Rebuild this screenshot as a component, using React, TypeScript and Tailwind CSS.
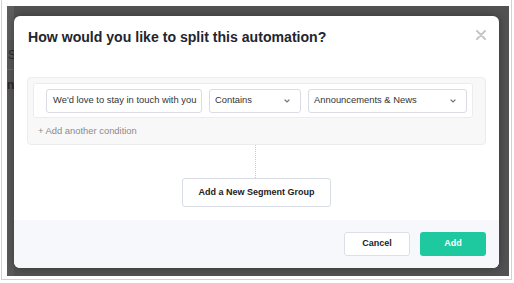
const FONT = 'font-["Liberation_Sans","Arial",sans-serif]'

function Chevron() {
  return (
    <svg width="6" height="4" viewBox="0 0 6 4" className="text-[#777]">
      <path d="M1 1l2 2 2-2" fill="none" stroke="currentColor" strokeWidth="1.2" strokeLinecap="round" />
    </svg>
  )
}

function Select({ label, width }: { label: string; width: string }) {
  return (
    <div
      className={`${width} h-[24px] flex items-center justify-between pl-[5px] pr-[10px] bg-white border border-[#d9dce5] rounded-[3px] text-[9.4px] text-[#333]`}
    >
      <span>{label}</span>
      <Chevron />
    </div>
  )
}

export default function App() {
  return (
    <div className={`w-[514px] h-[283px] bg-white ${FONT}`}>
      <div className="w-[511px] h-[280px] ml-[1px] border-x border-b border-[#d2d2d2] pt-[6px] pl-[5px]">
        <div className="w-[502px] h-[270px] bg-[#525252] flex">
          {/* page behind the overlay */}
          <div className="w-[7px] overflow-hidden bg-[#595959] text-[#2b2b2b] text-[12px]">
            <div className="h-[34px] bg-[#5e5e5e]" />
            <div className="h-[30px] leading-[30px] pl-[1px] border-b border-[#6a6a6a]">S</div>
            <div className="h-[30px] leading-[30px] font-bold">n</div>
          </div>

          <div className="pt-[10px]">
            <div className="w-[485px] h-[252px] bg-white rounded-[6px] overflow-hidden flex flex-col shadow-[0_0_8px_rgba(0,0,0,0.35)]">
              <div className="flex items-start justify-between pl-[14px] pr-[13px] pt-[11px] h-[61px]">
                <h1 className="text-[14.1px] leading-[20px] font-bold text-[#22262e]">
                  How would you like to split this automation?
                </h1>
                <svg width="10" height="10" viewBox="0 0 10 10" className="mt-[3px] text-[#c6c6c6]">
                  <path d="M1 1l8 8M9 1l-8 8" stroke="currentColor" strokeWidth="2" strokeLinecap="round" />
                </svg>
              </div>

              <div className="mx-[13px] bg-[#f8f8f9] border border-[#ececef] rounded-[4px] pt-[5px] pl-[5px] pr-[12px] h-[68px]">
                <div className="bg-white border border-[#ececef] rounded-[3px] h-[35px] flex items-center gap-[7px] pl-[12px]">
                  <div className="w-[156px] h-[24px] flex items-center pl-[6px] border border-[#d9dce5] rounded-[3px] text-[9.4px] text-[#333] overflow-hidden whitespace-nowrap">
                    We&apos;d love to stay in touch with you
                  </div>
                  <Select label="Contains" width="w-[92px]" />
                  <Select label="Announcements & News" width="w-[159px]" />
                </div>
                <div className="pl-[5px] pt-[6px] text-[9.4px] text-[#8a8a90]">+ Add another condition</div>
              </div>

              <div className="flex flex-col items-center">
                <div className="h-[33px] ml-[-2px] border-l border-dotted border-[#c9c9ce]" />
                <button className="w-[149px] h-[29px] bg-white border border-[#d9dce5] rounded-[3px] text-[9px] font-bold text-[#222]">
                  Add a New Segment Group
                </button>
              </div>

              <div className="mt-auto h-[48px] bg-[#f7f8fb] flex items-center justify-end gap-[10px] pr-[13px]">
                <button className="w-[66px] h-[24px] bg-white border border-[#dcdfe6] rounded-[3px] text-[9px] font-bold text-[#222]">
                  Cancel
                </button>
                <button className="w-[66px] h-[24px] bg-[#1fc99f] rounded-[3px] text-[9px] font-bold text-white">
                  Add
                </button>
              </div>
            </div>
          </div>
        </div>
      </div>
    </div>
  )
}
